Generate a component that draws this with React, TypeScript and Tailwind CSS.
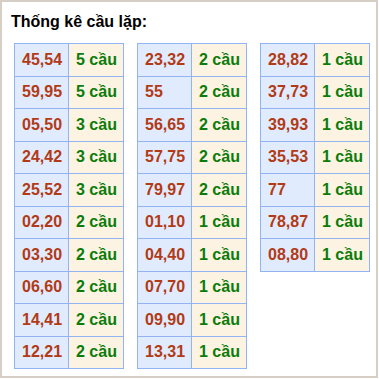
const cols: [string, number][][] = [
  [
    ["45,54", 5], ["59,95", 5], ["05,50", 3], ["24,42", 3], ["25,52", 3],
    ["02,20", 2], ["03,30", 2], ["06,60", 2], ["14,41", 2], ["12,21", 2],
  ],
  [
    ["23,32", 2], ["55", 2], ["56,65", 2], ["57,75", 2], ["79,97", 2],
    ["01,10", 1], ["04,40", 1], ["07,70", 1], ["09,90", 1], ["13,31", 1],
  ],
  [
    ["28,82", 1], ["37,73", 1], ["39,93", 1], ["35,53", 1], ["77", 1],
    ["78,87", 1], ["08,80", 1],
  ],
];

export default function App() {
  return (
    <div className="w-[378px] h-[378px] bg-white border-2 border-[#d6cfc6] font-['Liberation_Sans',Arial,sans-serif]">
      <h2 className="text-[16px] font-bold text-black pl-[9px] pt-[10px] leading-[20px]">Thống kê cầu lặp:</h2>
      <div className="flex items-start gap-[13px] pl-[12px] pt-[11px]">
        {cols.map((rows, i) => (
          <table key={i} className="border-collapse text-[16px] font-bold">
            <tbody>
              {rows.map(([pair, n]) => (
                <tr key={pair} className="h-[32.5px]">
                  <td className="w-[54px] border border-[#93b4f3] bg-[#e0ecfd] text-[#b23a16] text-left pl-[7px] pr-0 py-0">{pair}</td>
                  <td className="w-[55px] border border-[#93b4f3] bg-[#fdf3e2] text-[#0b7c0b] text-left pl-[7px] pr-0 py-0">{n} cầu</td>
                </tr>
              ))}
            </tbody>
          </table>
        ))}
      </div>
    </div>
  );
}
